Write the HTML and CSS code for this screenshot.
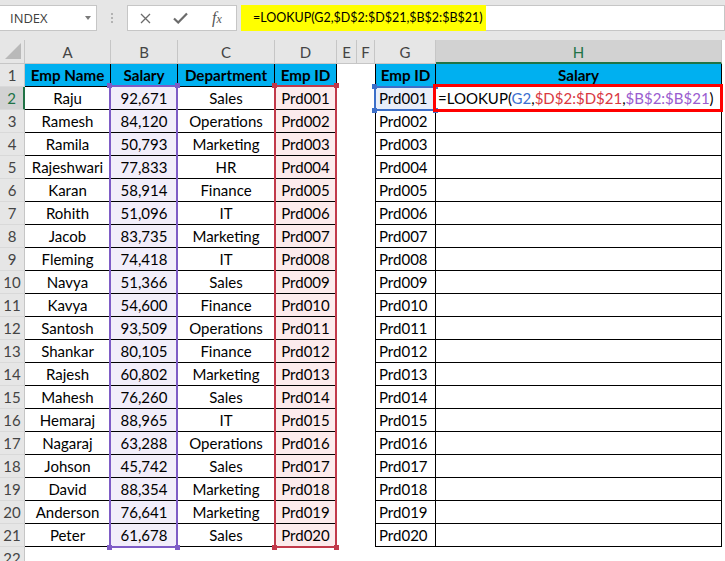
FILE: index.html
```html
<!DOCTYPE html>
<html>
<head>
<meta charset="utf-8">
<link rel="stylesheet" href="styles.css">
</head>
<body>
<div class="fbar">
  <div class="namebox"><span>INDEX</span><span class="arrow"></span></div>
  <div class="dots"><i></i><i></i><i></i></div>
  <div class="fxbox">
    <svg class="ic-x" width="11" height="11" viewBox="0 0 11 11"><path d="M1 1L10 10M10 1L1 10" stroke="#6b6b6b" stroke-width="1.3" fill="none"/></svg>
    <svg class="ic-ok" width="15" height="12" viewBox="0 0 15 12"><path d="M1 6.5L5.2 10.5L14 1.5" stroke="#6b6b6b" stroke-width="2.2" fill="none"/></svg>
    <span class="fx"><i>f</i><i class="sx">x</i></span>
  </div>
  <div class="formula"><span class="hl">=LOOKUP(G2,$D$2:$D$21,$B$2:$B$21)</span></div>
</div>

<div class="sheet">
  <div class="corner"><svg width="25" height="23" viewBox="0 0 25 23"><polygon points="21,3 21,19 5,19" fill="#b9b9b9"/></svg></div>
  <div class="ch">A</div><div class="ch">B</div><div class="ch">C</div><div class="ch">D</div><div class="ch">E</div><div class="ch">F</div><div class="ch">G</div><div class="ch sel">H</div>

  <div class="rh">1</div><div class="c hd">Emp Name</div><div class="c hd">Salary</div><div class="c hd">Department</div><div class="c hd">Emp ID</div><div class="e"></div><div class="e"></div><div class="c g hd">Emp ID</div><div class="c hd">Salary</div>

  <div class="rh sel">2</div><div class="c">Raju</div><div class="c b">92,671</div><div class="c">Sales</div><div class="c d">Prd001</div><div class="e"></div><div class="e"></div><div class="c g gl gs">Prd001</div><div class="c h">=LOOKUP(<span class="r1">G2</span>,<span class="r2">$D$2:$D$21</span>,<span class="r3">$B$2:$B$21</span>)</div>

  <div class="rh">3</div><div class="c">Ramesh</div><div class="c b">84,120</div><div class="c">Operations</div><div class="c d">Prd002</div><div class="e"></div><div class="e"></div><div class="c g gl">Prd002</div><div class="c h"></div>

  <div class="rh">4</div><div class="c">Ramila</div><div class="c b">50,793</div><div class="c">Marketing</div><div class="c d">Prd003</div><div class="e"></div><div class="e"></div><div class="c g gl">Prd003</div><div class="c h"></div>

  <div class="rh">5</div><div class="c">Rajeshwari</div><div class="c b">77,833</div><div class="c">HR</div><div class="c d">Prd004</div><div class="e"></div><div class="e"></div><div class="c g gl">Prd004</div><div class="c h"></div>

  <div class="rh">6</div><div class="c">Karan</div><div class="c b">58,914</div><div class="c">Finance</div><div class="c d">Prd005</div><div class="e"></div><div class="e"></div><div class="c g gl">Prd005</div><div class="c h"></div>

  <div class="rh">7</div><div class="c">Rohith</div><div class="c b">51,096</div><div class="c">IT</div><div class="c d">Prd006</div><div class="e"></div><div class="e"></div><div class="c g gl">Prd006</div><div class="c h"></div>

  <div class="rh">8</div><div class="c">Jacob</div><div class="c b">83,735</div><div class="c">Marketing</div><div class="c d">Prd007</div><div class="e"></div><div class="e"></div><div class="c g gl">Prd007</div><div class="c h"></div>

  <div class="rh">9</div><div class="c">Fleming</div><div class="c b">74,418</div><div class="c">IT</div><div class="c d">Prd008</div><div class="e"></div><div class="e"></div><div class="c g gl">Prd008</div><div class="c h"></div>

  <div class="rh">10</div><div class="c">Navya</div><div class="c b">51,366</div><div class="c">Sales</div><div class="c d">Prd009</div><div class="e"></div><div class="e"></div><div class="c g gl">Prd009</div><div class="c h"></div>

  <div class="rh">11</div><div class="c">Kavya</div><div class="c b">54,600</div><div class="c">Finance</div><div class="c d">Prd010</div><div class="e"></div><div class="e"></div><div class="c g gl">Prd010</div><div class="c h"></div>

  <div class="rh">12</div><div class="c">Santosh</div><div class="c b">93,509</div><div class="c">Operations</div><div class="c d">Prd011</div><div class="e"></div><div class="e"></div><div class="c g gl">Prd011</div><div class="c h"></div>

  <div class="rh">13</div><div class="c">Shankar</div><div class="c b">80,105</div><div class="c">Finance</div><div class="c d">Prd012</div><div class="e"></div><div class="e"></div><div class="c g gl">Prd012</div><div class="c h"></div>

  <div class="rh">14</div><div class="c">Rajesh</div><div class="c b">60,802</div><div class="c">Marketing</div><div class="c d">Prd013</div><div class="e"></div><div class="e"></div><div class="c g gl">Prd013</div><div class="c h"></div>

  <div class="rh">15</div><div class="c">Mahesh</div><div class="c b">76,260</div><div class="c">Sales</div><div class="c d">Prd014</div><div class="e"></div><div class="e"></div><div class="c g gl">Prd014</div><div class="c h"></div>

  <div class="rh">16</div><div class="c">Hemaraj</div><div class="c b">88,965</div><div class="c">IT</div><div class="c d">Prd015</div><div class="e"></div><div class="e"></div><div class="c g gl">Prd015</div><div class="c h"></div>

  <div class="rh">17</div><div class="c">Nagaraj</div><div class="c b">63,288</div><div class="c">Operations</div><div class="c d">Prd016</div><div class="e"></div><div class="e"></div><div class="c g gl">Prd016</div><div class="c h"></div>

  <div class="rh">18</div><div class="c">Johson</div><div class="c b">45,742</div><div class="c">Sales</div><div class="c d">Prd017</div><div class="e"></div><div class="e"></div><div class="c g gl">Prd017</div><div class="c h"></div>

  <div class="rh">19</div><div class="c">David</div><div class="c b">88,354</div><div class="c">Marketing</div><div class="c d">Prd018</div><div class="e"></div><div class="e"></div><div class="c g gl">Prd018</div><div class="c h"></div>

  <div class="rh">20</div><div class="c">Anderson</div><div class="c b">76,641</div><div class="c">Marketing</div><div class="c d">Prd019</div><div class="e"></div><div class="e"></div><div class="c g gl">Prd019</div><div class="c h"></div>

  <div class="rh">21</div><div class="c">Peter</div><div class="c b">61,678</div><div class="c">Sales</div><div class="c d">Prd020</div><div class="e"></div><div class="e"></div><div class="c g gl">Prd020</div><div class="c h"></div>

  <div class="rh">22</div><div class="e"></div><div class="e"></div><div class="e"></div><div class="e"></div><div class="e"></div><div class="e"></div><div class="e"></div><div class="e"></div>

  <div class="rng rng-b"><i class="k tl"></i><i class="k tr"></i><i class="k bl"></i><i class="k br"></i></div>
  <div class="rng rng-d"><i class="k tl"></i><i class="k tr"></i><i class="k bl"></i><i class="k br"></i></div>
  <div class="rng rng-g"><i class="k tl"></i><i class="k tr"></i><i class="k bl"></i><i class="k br"></i></div>
  <div class="rng-h"></div>
</div>
</body>
</html>
```

FILE: styles.css
```css
html, body {
  margin: 0;
  padding: 0;
}
body {
  width: 725px;
  height: 561px;
  overflow: hidden;
  background: #ffffff;
  font-family: Lato, "Liberation Sans", sans-serif;
  color: #000;
}

/* formula bar */
.fbar {
  height: 40px;
  box-sizing: border-box;
  padding-top: 5px;
  background: #e6e6e6;
  display: flex;
  align-items: flex-start;
}
.namebox {
  width: 98px;
  height: 26px;
  margin-left: -1px;
  box-sizing: border-box;
  border: 1px solid #c6c6c6;
  background: #fff;
  display: flex;
  align-items: center;
  padding-left: 10px;
  font-family: "Open Sans", "Liberation Sans", sans-serif;
  font-size: 13px;
  color: #404040;
}
.namebox .arrow {
  margin-left: auto;
  margin-right: 5px;
  width: 0;
  height: 0;
  border-left: 3.5px solid transparent;
  border-right: 3.5px solid transparent;
  border-top: 4px solid #7a7a7a;
}
.dots {
  width: 30px;
  padding-top: 8px;
  display: flex;
  flex-direction: column;
  align-items: center;
  gap: 2px;
}
.dots i {
  display: block;
  width: 2px;
  height: 2px;
  background: #b3b3b3;
}
.fxbox {
  width: 110px;
  height: 26px;
  box-sizing: border-box;
  border: 1px solid #c6c6c6;
  background: #fff;
  display: flex;
  align-items: center;
  padding-left: 12px;
}
.ic-x { margin-right: 22px; }
.ic-ok { margin-right: 24px; }
.fx {
  font-family: "Liberation Serif", serif;
  font-size: 16px;
  color: #555;
  line-height: 1;
}
.fx .sx {
  font-size: 12px;
}
.formula {
  flex: 1;
  margin-left: 4px;
  height: 26px;
  box-sizing: border-box;
  border: 1px solid #c6c6c6;
  border-left: 0;
  background: #fff;
  display: flex;
}
.hl {
  width: 245px;
  margin: -1px 0;
  box-sizing: border-box;
  padding-left: 12px;
  background: #ffff00;
  font-size: 12.5px;
  line-height: 26px;
  white-space: nowrap;
}

/* sheet grid */
.sheet {
  position: relative;
  display: grid;
  grid-template-columns: 25px 86px 67px 97px 62px 20px 18px 61px 286px;
  grid-template-rows: 24px repeat(22, 23px);
  font-size: 15px;
}
.corner {
  background: #e6e6e6;
  border-right: 1px solid #c6c6c6;
  border-bottom: 1px solid #c6c6c6;
}
.corner svg { display: block; }
.ch {
  background: #e6e6e6;
  border-right: 1px solid #c6c6c6;
  border-bottom: 1px solid #c6c6c6;
  text-align: center;
  line-height: 25px;
  font-size: 15px;
  color: #444;
}
.ch.sel {
  background: #d2d2d2;
  color: #217346;
  border-bottom: 2px solid #217346;
  line-height: 24px;
}
.rh {
  background: #e6e6e6;
  border-right: 1px solid #c6c6c6;
  border-bottom: 1px solid #d9d9d9;
  text-align: center;
  line-height: 22px;
  font-size: 15px;
  color: #444;
}
.rh.sel {
  background: #d2d2d2;
  color: #217346;
  border-right: 2px solid #217346;
}
.c {
  border-right: 1px solid #000;
  border-bottom: 1px solid #000;
  text-align: center;
  line-height: 22px;
  white-space: nowrap;
  overflow: hidden;
}
.hd {
  background: #00b0f0;
  font-weight: bold;
  font-size: 15.2px;
}
.g { border-left: 1px solid #000; }
.gl {
  text-align: left;
  padding-left: 3px;
}
.b { background: #f2eefa; }
.d { background: #fcebec; }
.gs { background: #e8eef9; }
.h {
  text-align: left;
  padding-left: 2px;
  overflow: visible;
}
.r1 { color: #3b6fd0; }
.r2 { color: #d9373f; }
.r3 { color: #9a5ccf; }

/* range highlights drawn over the cells */
.rng {
  position: absolute;
  box-sizing: border-box;
  border: 2px solid currentColor;
}
.rng-b { left: 109px; top: 45px; width: 69px; height: 463px; color: #7e5cc6; }
.rng-d { left: 274px; top: 45px; width: 63px; height: 463px; color: #c1394a; }
.rng-g { left: 374px; top: 46px; width: 62px; height: 25px; color: #3c6fc9; }
.k {
  position: absolute;
  width: 5px;
  height: 5px;
  background: currentColor;
}
.k.tl { left: -4px; top: -4px; }
.k.tr { right: -4px; top: -4px; }
.k.bl { left: -4px; bottom: -4px; }
.k.br { right: -4px; bottom: -4px; }
.rng-h {
  position: absolute;
  left: 433px;
  top: 44px;
  width: 290px;
  height: 28px;
  box-sizing: border-box;
  border: 3px solid #ff0000;
}
```
